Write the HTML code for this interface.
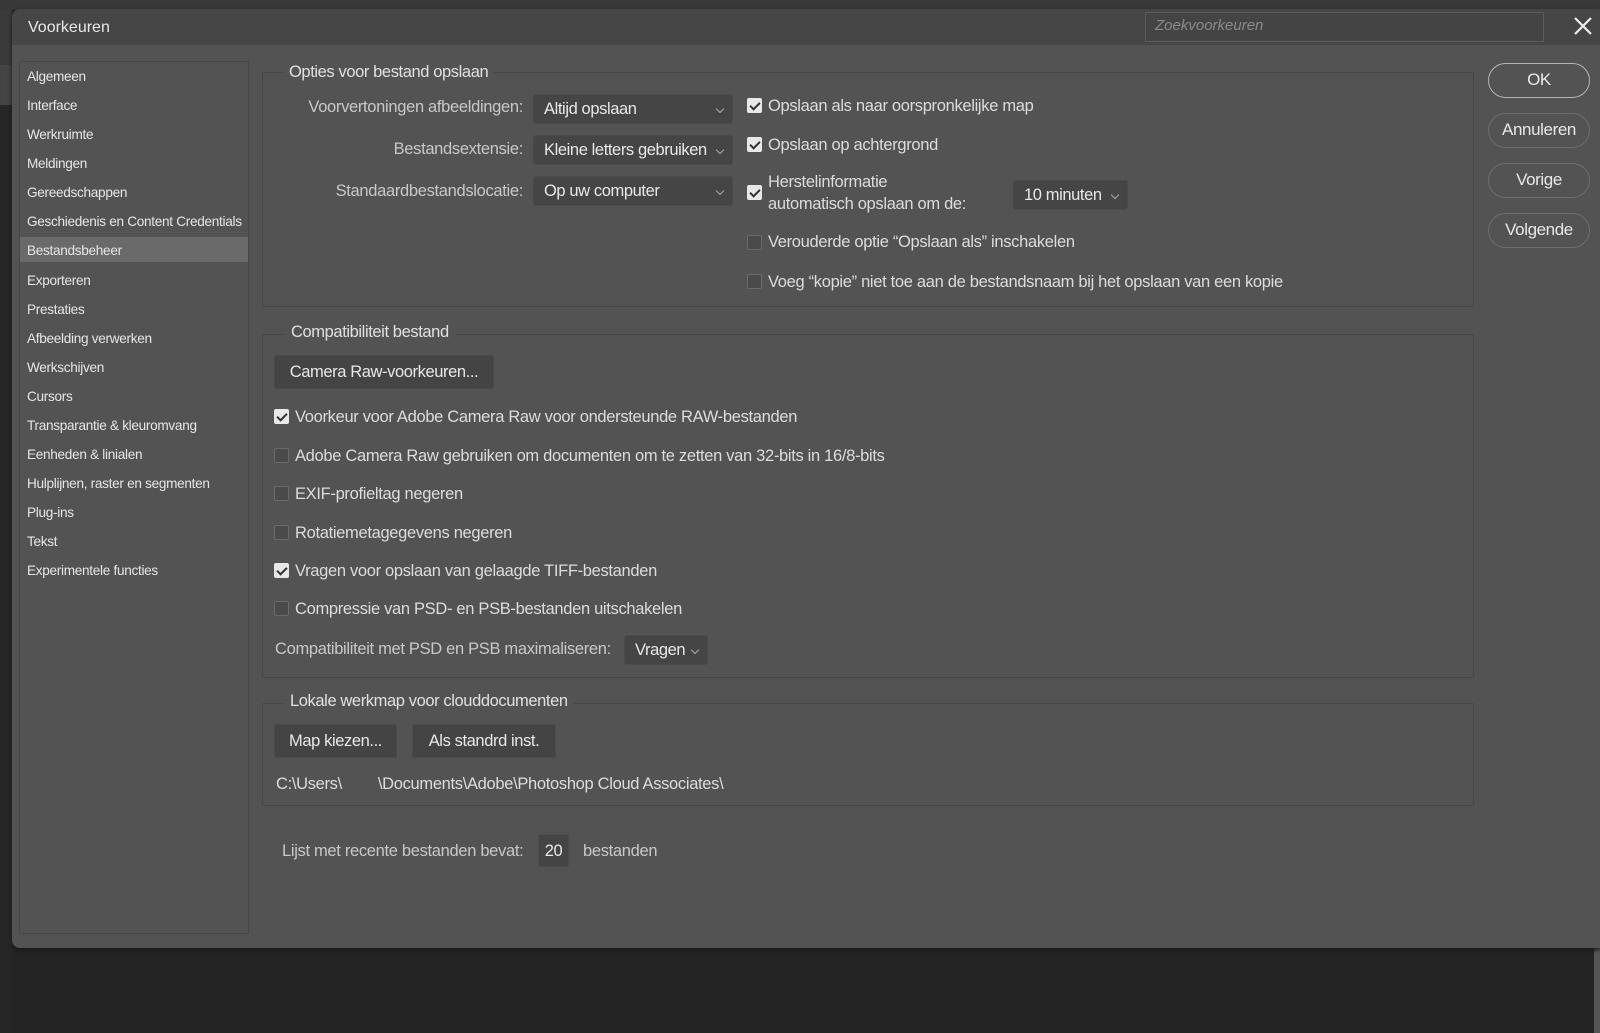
<!DOCTYPE html>
<html><head><meta charset="utf-8"><style>
*{box-sizing:border-box;margin:0;padding:0}
body{width:1600px;height:1033px;background:#242424;position:relative;overflow:hidden;font-family:"Liberation Sans",sans-serif;color:#dcdcdc}
.a{position:absolute;white-space:nowrap}
.t{font-size:16.5px;letter-spacing:-0.32px;line-height:20px}
.s{font-size:13.6px;letter-spacing:-0.3px;line-height:18px;color:#e6e6e6}
.grp{position:absolute;border:1px solid #474747;border-radius:2px}
.gt{position:absolute;background:#535353;padding:0 6px;font-size:16.5px;letter-spacing:-0.4px;line-height:20px;color:#e0e0e0}
.dd{position:absolute;background:#454545;border:1px solid #4b4b4b;border-radius:3px;font-size:16.5px;letter-spacing:-0.4px;padding-left:10px;line-height:28px;color:#e8e8e8}
.dd:after{content:"";position:absolute;right:9px;top:11px;width:5px;height:5px;border-right:1px solid #aaa;border-bottom:1px solid #aaa;transform:rotate(45deg)}
.cb{position:absolute;width:15px;height:15px;border:1px solid #6a6a6a;background:#4a4a4a;border-radius:2px}
.cb.on{background:#e8e8e8;border-color:#e8e8e8}
.cb.on:after{content:"";position:absolute;left:4px;top:1px;width:4px;height:8px;border-right:2px solid #333;border-bottom:2px solid #333;transform:rotate(45deg)}
.btn{position:absolute;background:#444;border:1px solid #4a4a4a;border-radius:2px;font-size:16.5px;letter-spacing:-0.4px;text-align:center;color:#e8e8e8}
.pill{position:absolute;left:1488px;width:102px;height:35px;border:1.5px solid #6e6e6e;border-radius:18px;text-align:center;line-height:32px;font-size:17px;letter-spacing:-0.4px;color:#e8e8e8}
</style></head><body>
<div class="a" style="left:0;top:0;width:1600px;height:10px;background:#383838"></div>
<div class="a" style="left:0;top:10px;width:12px;height:55px;background:#3a3a3a"></div>
<div class="a" style="left:0;top:65px;width:12px;height:40px;background:#444"></div>
<div class="a" style="left:0;top:105px;width:12px;height:928px;background:#262626"></div>
<div class="a" style="left:1594px;top:948px;width:6px;height:85px;background:#555"></div>
<!-- dialog -->
<div class="a" style="left:12px;top:9px;width:1588px;height:939px;background:#535353;border-radius:8px 0 0 8px;box-shadow:0 2px 4px #1a1a1a"></div>
<div class="a" style="left:12px;top:9px;width:1588px;height:36px;background:#464646;border-radius:8px 0 0 0"></div>
<div class="a" style="left:28px;top:18px;font-size:16px;color:#e8e8e8;line-height:20px">Voorkeuren</div>
<div class="a" style="left:1145px;top:12px;width:399px;height:30px;background:#444;border:1px solid #5c5c5c"></div>
<div class="a" style="left:1155px;top:16px;font-size:15px;font-style:italic;color:#8a8a8a;line-height:20px">Zoekvoorkeuren</div>
<svg class="a" style="left:1574px;top:17px" width="18" height="18"><path d="M1 1L17 17M17 1L1 17" stroke="#eee" stroke-width="2.2"/></svg>
<!-- sidebar -->
<div class="a" style="left:19px;top:61px;width:230px;height:873px;border:1px solid #474747"></div>
<div class="a" style="left:20px;top:237px;width:228px;height:25px;background:#6a6a6a"></div>
<div class="a s" style="left:27px;top:62px;line-height:29.08px">Algemeen<br>Interface<br>Werkruimte<br>Meldingen<br>Gereedschappen<br>Geschiedenis en Content Credentials<br>Bestandsbeheer<br>Exporteren<br>Prestaties<br>Afbeelding verwerken<br>Werkschijven<br>Cursors<br>Transparantie &amp; kleuromvang<br>Eenheden &amp; linialen<br>Hulplijnen, raster en segmenten<br>Plug-ins<br>Tekst<br>Experimentele functies</div>
<!-- buttons -->
<div class="pill" style="top:63px;border-color:#b5b5b5">OK</div>
<div class="pill" style="top:113px">Annuleren</div>
<div class="pill" style="top:163px">Vorige</div>
<div class="pill" style="top:213px">Volgende</div>
<!-- group 1 -->
<div class="grp" style="left:262px;top:72px;width:1212px;height:235px"></div>
<div class="gt" style="left:283px;top:62px">Opties voor bestand opslaan</div>
<div class="a t" style="right:1077px;top:97px;color:#c8c8c8">Voorvertoningen afbeeldingen:</div>
<div class="a t" style="right:1077px;top:139px;color:#c8c8c8">Bestandsextensie:</div>
<div class="a t" style="right:1077px;top:181px;color:#c8c8c8">Standaardbestandslocatie:</div>
<div class="dd" style="left:533px;top:94px;width:200px;height:30px">Altijd opslaan</div>
<div class="dd" style="left:533px;top:135px;width:200px;height:30px">Kleine letters gebruiken</div>
<div class="dd" style="left:533px;top:176px;width:200px;height:30px">Op uw computer</div>
<div class="cb on" style="left:747px;top:98px"></div><div class="a t" style="left:768px;top:96px">Opslaan als naar oorspronkelijke map</div>
<div class="cb on" style="left:747px;top:137px"></div><div class="a t" style="left:768px;top:135px">Opslaan op achtergrond</div>
<div class="cb on" style="left:747px;top:185px"></div><div class="a t" style="left:768px;top:171px;line-height:22px">Herstelinformatie<br>automatisch opslaan om de:</div>
<div class="dd" style="left:1013px;top:180px;width:115px;height:30px">10 minuten</div>
<div class="cb" style="left:747px;top:235px"></div><div class="a t" style="left:768px;top:232px">Verouderde optie “Opslaan als” inschakelen</div>
<div class="cb" style="left:747px;top:274px"></div><div class="a t" style="left:768px;top:272px">Voeg “kopie” niet toe aan de bestandsnaam bij het opslaan van een kopie</div>
<!-- group 2 -->
<div class="grp" style="left:262px;top:334px;width:1212px;height:344px"></div>
<div class="gt" style="left:285px;top:322px">Compatibiliteit bestand</div>
<div class="btn" style="left:274px;top:355px;width:220px;height:34px;line-height:32px">Camera Raw-voorkeuren...</div>
<div class="cb on" style="left:274px;top:409px"></div><div class="a t" style="left:295px;top:407px">Voorkeur voor Adobe Camera Raw voor ondersteunde RAW-bestanden</div>
<div class="cb" style="left:274px;top:448px"></div><div class="a t" style="left:295px;top:446px">Adobe Camera Raw gebruiken om documenten om te zetten van 32-bits in 16/8-bits</div>
<div class="cb" style="left:274px;top:486px"></div><div class="a t" style="left:295px;top:484px">EXIF-profieltag negeren</div>
<div class="cb" style="left:274px;top:525px"></div><div class="a t" style="left:295px;top:523px">Rotatiemetagegevens negeren</div>
<div class="cb on" style="left:274px;top:563px"></div><div class="a t" style="left:295px;top:561px">Vragen voor opslaan van gelaagde TIFF-bestanden</div>
<div class="cb" style="left:274px;top:601px"></div><div class="a t" style="left:295px;top:599px">Compressie van PSD- en PSB-bestanden uitschakelen</div>
<div class="a t" style="left:275px;top:639px;color:#c8c8c8">Compatibiliteit met PSD en PSB maximaliseren:</div>
<div class="dd" style="left:624px;top:635px;width:84px;height:30px">Vragen</div>
<!-- group 3 -->
<div class="grp" style="left:262px;top:703px;width:1212px;height:103px"></div>
<div class="gt" style="left:284px;top:691px">Lokale werkmap voor clouddocumenten</div>
<div class="btn" style="left:274px;top:724px;width:123px;height:34px;line-height:32px">Map kiezen...</div>
<div class="btn" style="left:412px;top:724px;width:144px;height:34px;line-height:32px">Als standrd inst.</div>
<div class="a t" style="left:276px;top:774px">C:\Users\<span style="display:inline-block;width:36px"></span>\Documents\Adobe\Photoshop Cloud Associates\</div>
<!-- recent -->
<div class="a t" style="left:282px;top:841px;color:#c8c8c8">Lijst met recente bestanden bevat:</div>
<div class="a" style="left:538px;top:834px;width:31px;height:33px;background:#444;border:1px solid #4c4c4c;text-align:center;line-height:33px;font-size:16.5px;letter-spacing:-0.4px;color:#e8e8e8">20</div>
<div class="a t" style="left:583px;top:841px;color:#c8c8c8">bestanden</div>
</body></html>
